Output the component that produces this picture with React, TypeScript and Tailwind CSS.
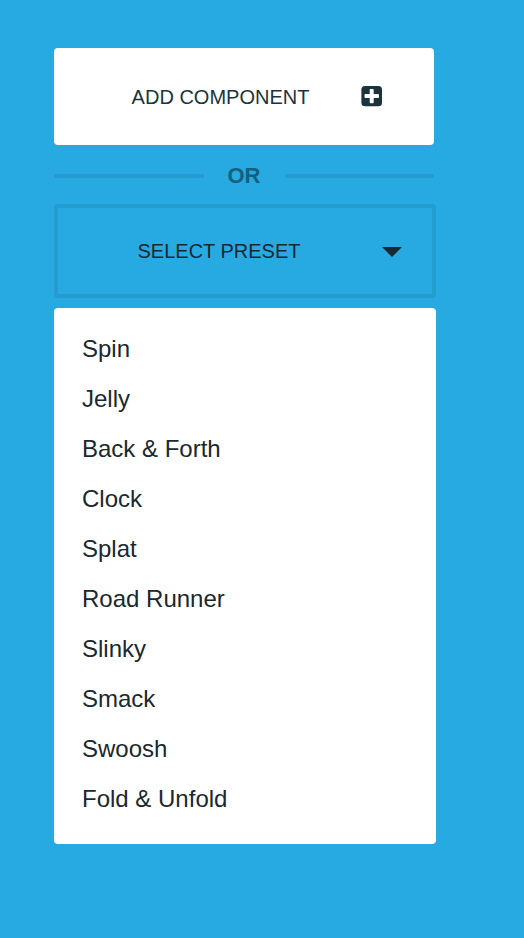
import React, { useState } from 'react';

const PRESETS = [
  'Spin',
  'Jelly',
  'Back & Forth',
  'Clock',
  'Splat',
  'Road Runner',
  'Slinky',
  'Smack',
  'Swoosh',
  'Fold & Unfold',
];

const PlusIcon: React.FC = () => (
  <svg width="22" height="24" viewBox="0 0 22 24" aria-hidden="true">
    <rect x="0.4" y="0.9" width="20.6" height="20.4" rx="3.6" fill="#1b343c" />
    <path
      d="M9.5 4h2.4a.8.8 0 0 1 .8.8v4.3h4.4a.8.8 0 0 1 .8.8v2.4a.8.8 0 0 1-.8.8h-4.4v4.3a.8.8 0 0 1-.8.8H9.5a.8.8 0 0 1-.8-.8v-4.3H4.3a.8.8 0 0 1-.8-.8V9.900a.8.8 0 0 1 .8-.8h4.400V4.800a.8.8 0 0 1 .8-.8z"
      fill="#fff"
    />
  </svg>
);

const CaretIcon: React.FC = () => (
  <svg width="20" height="12" viewBox="0 0 20 12" aria-hidden="true">
    <path d="M0 2h20L10 12z" fill="#19292f" />
  </svg>
);

const Divider: React.FC = () => (
  <div className="mr-0.5 flex h-[59px] items-center gap-6 pt-0.5">
    <div className="h-1 flex-1 bg-[#249ccf]" />
    <span className="text-[22px] leading-7 font-bold text-[#13607f]">OR</span>
    <div className="h-1 flex-1 bg-[#249ccf]" />
  </div>
);

const App: React.FC = () => {
  const [open, setOpen] = useState(true);
  const [selected, setSelected] = useState<string | null>(null);

  const choose = (preset: string) => {
    setSelected(preset);
    setOpen(false);
  };

  return (
    <main className="min-h-screen bg-[#27a9e1] pt-12 pr-[88px] pb-12 pl-[54px] font-['Helvetica_Neue','Liberation_Sans',Arial,sans-serif] text-[#19292f]">
      <div className="flex flex-col">
        <button
          type="button"
          className="mr-0.5 flex h-[97px] cursor-pointer items-center rounded bg-white pr-[51px] pl-[26px] text-[20px] leading-6 text-[#1b343c]"
        >
          <span className="flex-1 text-center">ADD COMPONENT</span>
          <PlusIcon />
        </button>

        <Divider />

        <button
          type="button"
          aria-haspopup="listbox"
          aria-expanded={open}
          onClick={() => setOpen(!open)}
          className="flex h-[94px] cursor-pointer items-center gap-0.5 rounded border-4 border-[#249ccf] pr-[30px] text-[20px] leading-6"
        >
          <span className="flex-1 text-center">SELECT PRESET</span>
          <CaretIcon />
        </button>

        {open && (
          <ul role="listbox" aria-label="Presets" className="mt-2.5 rounded bg-white pt-4 pb-5">
            {PRESETS.map((preset) => (
              <li key={preset} role="option" aria-selected={preset === selected}>
                <button
                  type="button"
                  onClick={() => choose(preset)}
                  className="h-[50px] w-full cursor-pointer px-7 text-left text-2xl hover:bg-[#e9f6fc]"
                >
                  {preset}
                </button>
              </li>
            ))}
          </ul>
        )}
      </div>
    </main>
  );
};

export default App;
